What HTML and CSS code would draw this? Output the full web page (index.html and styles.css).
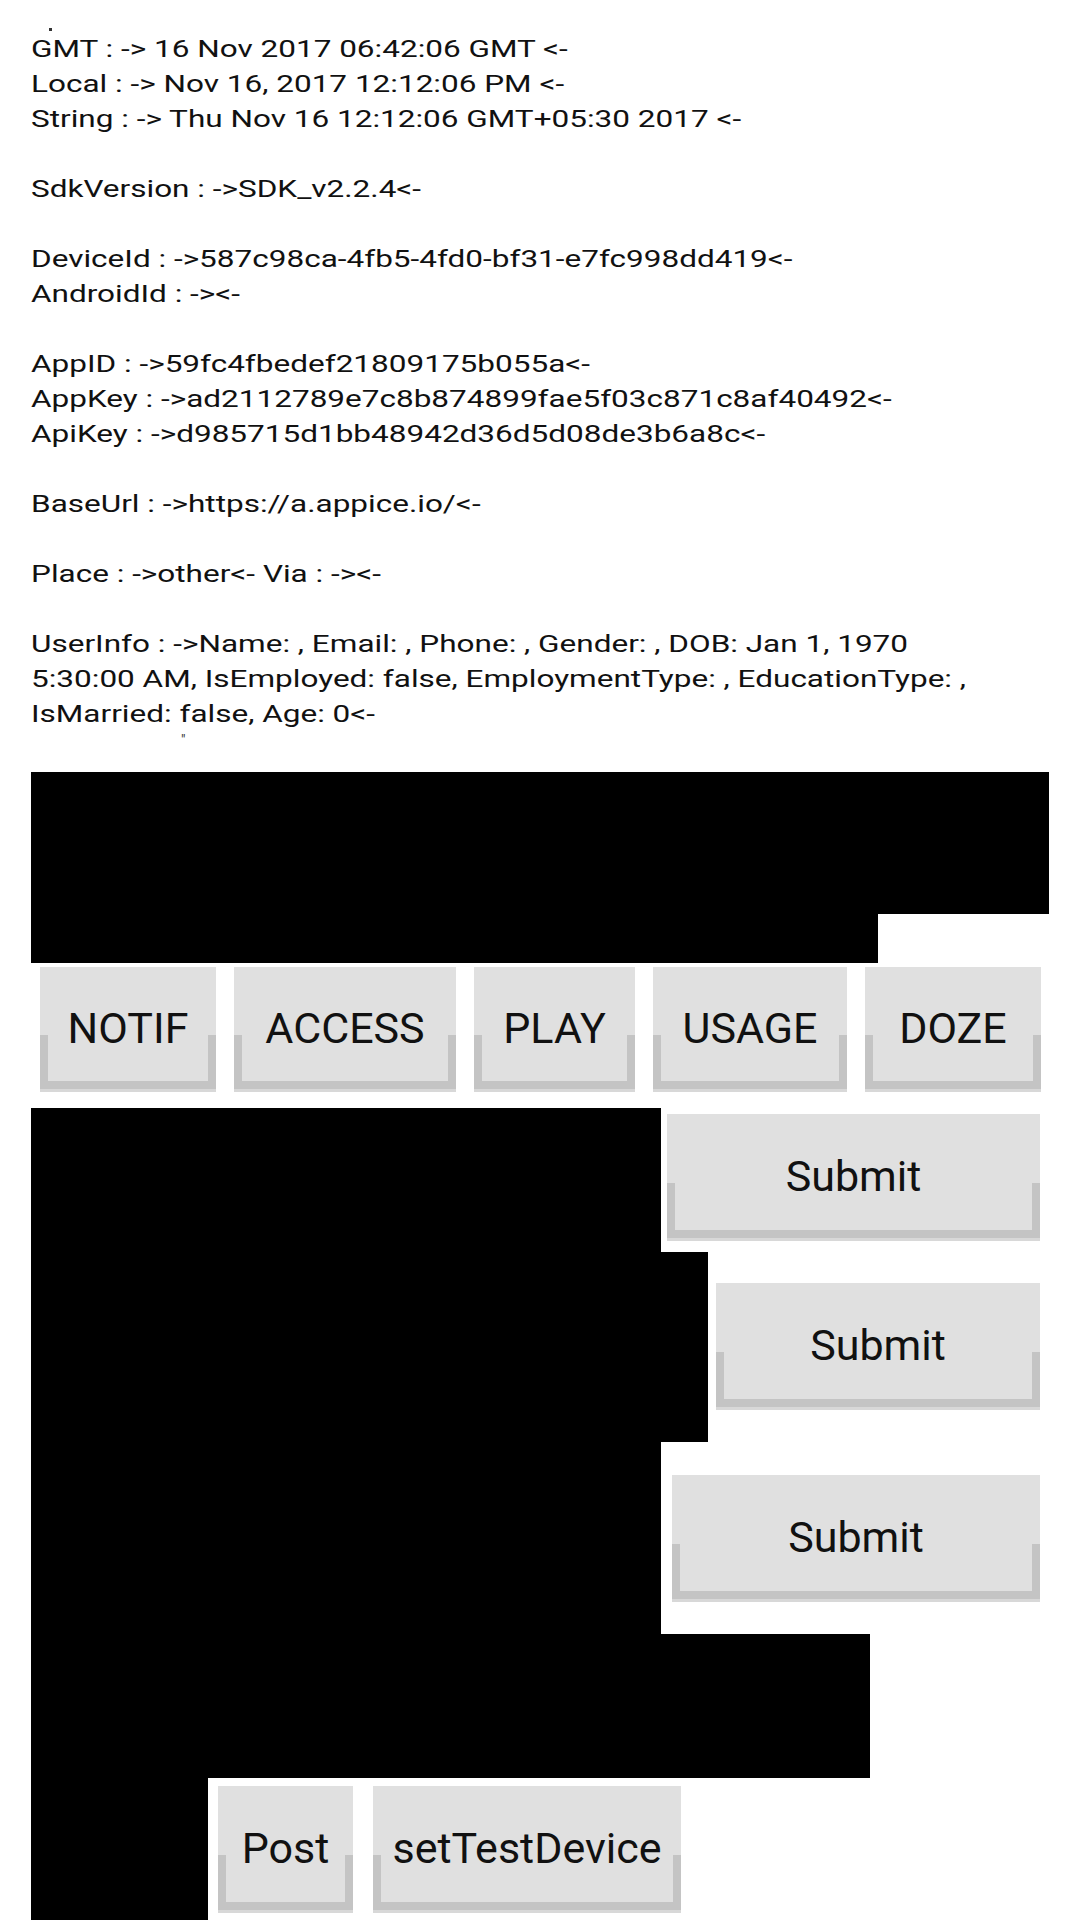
FILE: index.html
```html
<!DOCTYPE html>
<html lang="en">
<head>
<meta charset="utf-8">
<title>AppICE SDK Info</title>
<link rel="stylesheet" href="styles.css">
</head>
<body>
<div class="screen">
  <div class="topmark"><span class="dot"></span></div>
  <div class="info">
    <div class="ln">GMT : -&gt; 16 Nov 2017 06:42:06 GMT &lt;-</div>
    <div class="ln">Local : -&gt; Nov 16, 2017 12:12:06 PM &lt;-</div>
    <div class="ln">String : -&gt; Thu Nov 16 12:12:06 GMT+05:30 2017 &lt;-</div>
    <div class="ln blank"></div>
    <div class="ln">SdkVersion : -&gt;SDK_v2.2.4&lt;-</div>
    <div class="ln blank"></div>
    <div class="ln">DeviceId : -&gt;587c98ca-4fb5-4fd0-bf31-e7fc998dd419&lt;-</div>
    <div class="ln">AndroidId : -&gt;&lt;-</div>
    <div class="ln blank"></div>
    <div class="ln">AppID : -&gt;59fc4fbedef21809175b055a&lt;-</div>
    <div class="ln">AppKey : -&gt;ad2112789e7c8b874899fae5f03c871c8af40492&lt;-</div>
    <div class="ln">ApiKey : -&gt;d985715d1bb48942d36d5d08de3b6a8c&lt;-</div>
    <div class="ln blank"></div>
    <div class="ln">BaseUrl : -&gt;https://a.appice.io/&lt;-</div>
    <div class="ln blank"></div>
    <div class="ln">Place : -&gt;other&lt;- Via : -&gt;&lt;-</div>
    <div class="ln blank"></div>
    <div class="ln">UserInfo : -&gt;Name: , Email: , Phone: , Gender: , DOB: Jan 1, 1970</div>
    <div class="ln">5:30:00 AM, IsEmployed: false, EmploymentType: , EducationType: ,</div>
    <div class="ln">IsMarried: false, Age: 0&lt;-</div>
  </div>
  <div class="markrow"><span class="tick">″</span></div>

  <div class="redact-top">
    <div class="blk blk-wide"></div>
    <div class="blk blk-corner"></div>
  </div>

  <div class="toggles">
    <button class="btn b-notif">NOTIF</button>
    <button class="btn b-access">ACCESS</button>
    <button class="btn b-play">PLAY</button>
    <button class="btn b-usage">USAGE</button>
    <button class="btn b-doze">DOZE</button>
  </div>

  <div class="lower">
    <div class="row row-1">
      <div class="blk blk-col"></div>
      <button class="btn submit submit-1">Submit</button>
    </div>
    <div class="row row-2">
      <div class="blk blk-col-wide"></div>
      <button class="btn submit submit-2">Submit</button>
    </div>
    <div class="row row-3">
      <div class="blk blk-col"></div>
      <button class="btn submit submit-3">Submit</button>
    </div>
    <div class="row row-4">
      <div class="blk blk-band"></div>
    </div>
    <div class="row row-5">
      <div class="blk blk-stub"></div>
      <button class="btn b-post">Post</button>
      <button class="btn b-test">setTestDevice</button>
    </div>
  </div>
</div>
</body>
</html>
```

FILE: styles.css
```css
html, body {
  margin: 0;
  padding: 0;
  background: #ffffff;
}

.screen {
  width: 1080px;
  height: 1920px;
  overflow: hidden;
  padding-left: 31px;
  box-sizing: border-box;
  font-family: Roboto, "Noto Sans", sans-serif;
  color: #111111;
}

/* tiny clipped glyph remnant at the top */
.topmark {
  height: 32px;
  box-sizing: border-box;
  padding: 28px 0 0 18px;
}
.dot {
  display: block;
  width: 3px;
  height: 3px;
  background: #333333;
}

/* info text block */
.info {
  font-size: 23px;
  line-height: 35px;
  white-space: nowrap;
  transform: scaleX(1.37);
  transform-origin: 0 0;
  color: #111111;
}
.ln {
  height: 35px;
}

.markrow {
  height: 40px;
  box-sizing: border-box;
  padding: 1px 0 0 150px;
}
.tick {
  display: block;
  font-size: 14px;
  line-height: 14px;
  color: #333333;
}

/* redaction blocks */
.blk {
  background: #000000;
  flex-shrink: 0;
}

.redact-top {
  display: flex;
  align-items: flex-start;
}
.blk-wide {
  width: 847px;
  height: 191px;
}
.blk-corner {
  width: 171px;
  height: 142px;
}

/* buttons */
.btn {
  position: relative;
  flex-shrink: 0;
  display: flex;
  align-items: center;
  justify-content: center;
  box-sizing: border-box;
  margin: 0;
  padding: 0;
  border: 0;
  border-bottom: 3px solid #d8d8d8;
  border-radius: 0;
  background: #e0e0e0;
  font-family: Roboto, "Noto Sans", sans-serif;
  font-size: 43px;
  color: #111111;
  height: 125px;
}
.btn::after {
  content: "";
  position: absolute;
  left: 0;
  right: 0;
  bottom: 0;
  height: 44%;
  border: 8px solid #c4c4c4;
  border-top: 0;
  box-sizing: border-box;
  pointer-events: none;
}

.toggles {
  display: flex;
  gap: 18px;
  margin-top: 4px;
  padding-left: 9px;
}
.b-notif { width: 176px; }
.b-access { width: 222px; }
.b-play { width: 161px; }
.b-usage { width: 194px; }
.b-doze { width: 176px; }

.lower {
  margin-top: 16px;
}
.row {
  display: flex;
  align-items: flex-start;
}
.row-1 { height: 144px; }
.row-2 { height: 190px; }
.row-3 { height: 192px; }
.row-4 { height: 144px; }
.row-5 { height: 144px; }

.row .blk {
  height: 100%;
}
.blk-col { width: 630px; }
.blk-col-wide { width: 677px; }
.blk-band { width: 839px; }
.blk-stub { width: 177px; }

.submit { height: 127px; }
.submit-1 {
  width: 373px;
  margin-left: 6px;
  margin-top: 6px;
}
.submit-2 {
  width: 324px;
  margin-left: 8px;
  margin-top: 31px;
}
.submit-3 {
  width: 368px;
  margin-left: 11px;
  margin-top: 33px;
}

.b-post {
  width: 135px;
  height: 127px;
  margin-left: 10px;
  margin-top: 8px;
}
.b-test {
  width: 308px;
  height: 127px;
  margin-left: 20px;
  margin-top: 8px;
}
```
